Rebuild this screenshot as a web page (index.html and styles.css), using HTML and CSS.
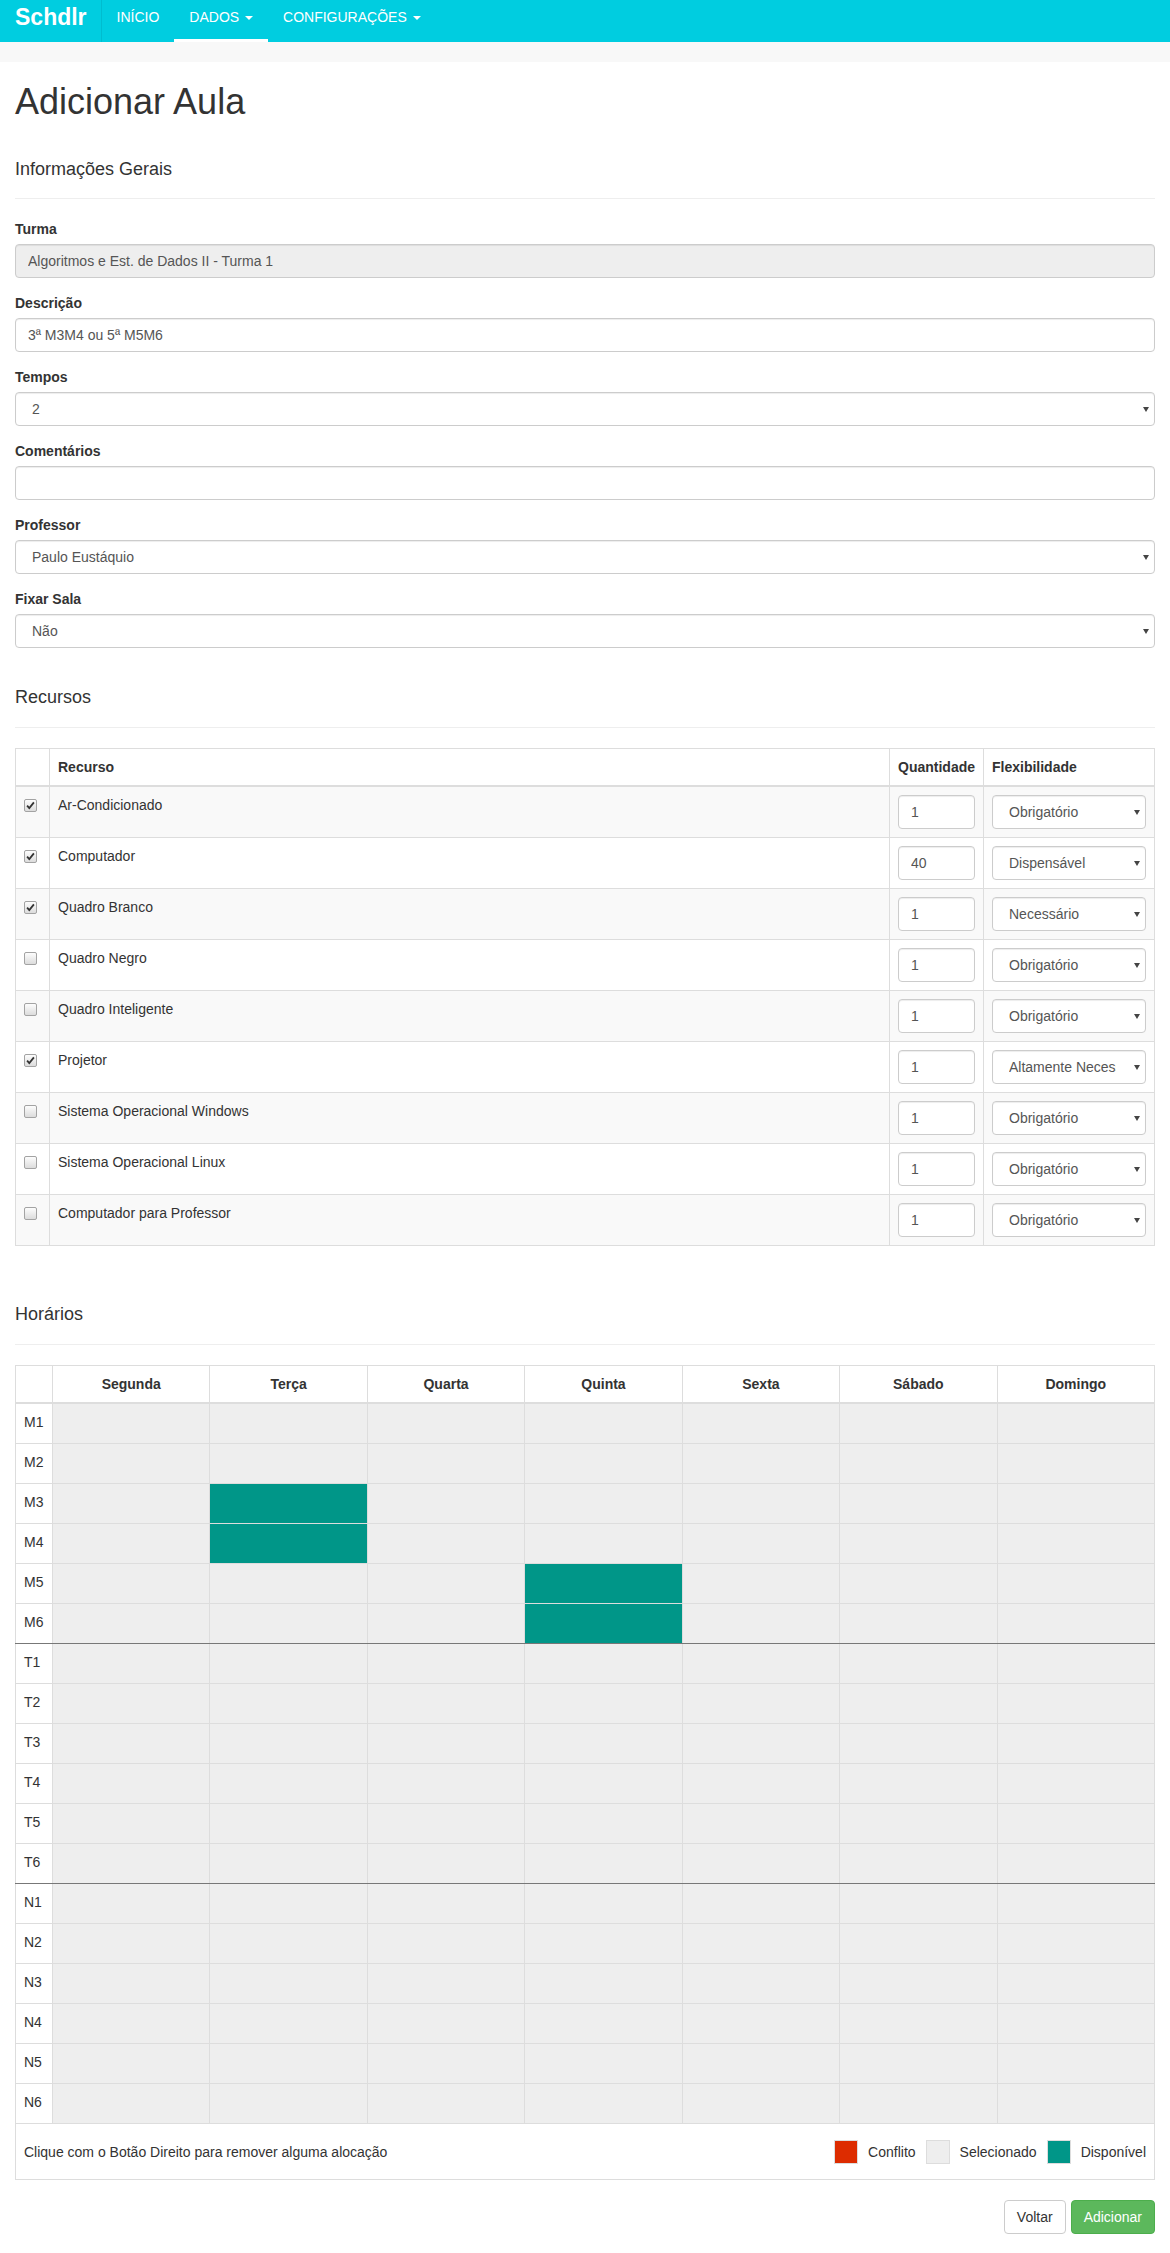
FILE: index.html
```html
<!DOCTYPE html>
<html lang="pt-BR">
<head>
<meta charset="utf-8">
<title>Adicionar Aula - Schdlr</title>
<link rel="stylesheet" href="styles.css">
</head>
<body>
<nav class="navbar">
  <a class="brand" href="#">Schdlr</a>
  <ul class="nav">
    <li><a href="#">INÍCIO</a></li>
    <li class="active"><a href="#">DADOS <span class="caret"></span></a></li>
    <li><a href="#">CONFIGURAÇÕES <span class="caret"></span></a></li>
  </ul>
</nav>
<div class="band"></div>

<div class="container">
  <h1 class="title">Adicionar Aula</h1>

  <div class="page-header first"><h4>Informações Gerais</h4></div>

  <form>
    <div class="form-group">
      <label>Turma</label>
      <input class="form-control" type="text" value="Algoritmos e Est. de Dados II - Turma 1" disabled>
    </div>
    <div class="form-group">
      <label>Descrição</label>
      <input class="form-control" type="text" value="3ª M3M4 ou 5ª M5M6">
    </div>
    <div class="form-group">
      <label>Tempos</label>
      <div class="select-wrap">
        <select class="form-control"><option>1</option><option selected>2</option><option>3</option><option>4</option></select>
      </div>
    </div>
    <div class="form-group">
      <label>Comentários</label>
      <input class="form-control" type="text" value="">
    </div>
    <div class="form-group">
      <label>Professor</label>
      <div class="select-wrap">
        <select class="form-control"><option selected>Paulo Eustáquio</option></select>
      </div>
    </div>
    <div class="form-group">
      <label>Fixar Sala</label>
      <div class="select-wrap">
        <select class="form-control"><option selected>Não</option><option>Sim</option></select>
      </div>
    </div>
  </form>

  <div class="page-header"><h4>Recursos</h4></div>

  <table class="table striped res">
    <thead>
      <tr>
        <th class="c-check"></th>
        <th>Recurso</th>
        <th class="c-qty">Quantidade</th>
        <th class="c-flex">Flexibilidade</th>
      </tr>
    </thead>
    <tbody>
      <tr>
        <td><label class="cb"><input type="checkbox" checked><span class="box"><svg viewBox="0 0 11 11"><path d="M2.1 5.6 L4.3 8.1 L8.9 2.4"/></svg></span></label></td>
        <td>Ar-Condicionado</td>
        <td><input class="form-control" type="text" value="1"></td>
        <td><div class="select-wrap"><select class="form-control"><option selected>Obrigatório</option><option>Altamente Necessário</option><option>Necessário</option><option>Dispensável</option></select></div></td>
      </tr>
      <tr>
        <td><label class="cb"><input type="checkbox" checked><span class="box"><svg viewBox="0 0 11 11"><path d="M2.1 5.6 L4.3 8.1 L8.9 2.4"/></svg></span></label></td>
        <td>Computador</td>
        <td><input class="form-control" type="text" value="40"></td>
        <td><div class="select-wrap"><select class="form-control"><option>Obrigatório</option><option>Altamente Necessário</option><option>Necessário</option><option selected>Dispensável</option></select></div></td>
      </tr>
      <tr>
        <td><label class="cb"><input type="checkbox" checked><span class="box"><svg viewBox="0 0 11 11"><path d="M2.1 5.6 L4.3 8.1 L8.9 2.4"/></svg></span></label></td>
        <td>Quadro Branco</td>
        <td><input class="form-control" type="text" value="1"></td>
        <td><div class="select-wrap"><select class="form-control"><option>Obrigatório</option><option>Altamente Necessário</option><option selected>Necessário</option><option>Dispensável</option></select></div></td>
      </tr>
      <tr>
        <td><label class="cb"><input type="checkbox"><span class="box"><svg viewBox="0 0 11 11"><path d="M2.1 5.6 L4.3 8.1 L8.9 2.4"/></svg></span></label></td>
        <td>Quadro Negro</td>
        <td><input class="form-control" type="text" value="1"></td>
        <td><div class="select-wrap"><select class="form-control"><option selected>Obrigatório</option><option>Altamente Necessário</option><option>Necessário</option><option>Dispensável</option></select></div></td>
      </tr>
      <tr>
        <td><label class="cb"><input type="checkbox"><span class="box"><svg viewBox="0 0 11 11"><path d="M2.1 5.6 L4.3 8.1 L8.9 2.4"/></svg></span></label></td>
        <td>Quadro Inteligente</td>
        <td><input class="form-control" type="text" value="1"></td>
        <td><div class="select-wrap"><select class="form-control"><option selected>Obrigatório</option><option>Altamente Necessário</option><option>Necessário</option><option>Dispensável</option></select></div></td>
      </tr>
      <tr>
        <td><label class="cb"><input type="checkbox" checked><span class="box"><svg viewBox="0 0 11 11"><path d="M2.1 5.6 L4.3 8.1 L8.9 2.4"/></svg></span></label></td>
        <td>Projetor</td>
        <td><input class="form-control" type="text" value="1"></td>
        <td><div class="select-wrap"><select class="form-control"><option>Obrigatório</option><option selected>Altamente Necessário</option><option>Necessário</option><option>Dispensável</option></select></div></td>
      </tr>
      <tr>
        <td><label class="cb"><input type="checkbox"><span class="box"><svg viewBox="0 0 11 11"><path d="M2.1 5.6 L4.3 8.1 L8.9 2.4"/></svg></span></label></td>
        <td>Sistema Operacional Windows</td>
        <td><input class="form-control" type="text" value="1"></td>
        <td><div class="select-wrap"><select class="form-control"><option selected>Obrigatório</option><option>Altamente Necessário</option><option>Necessário</option><option>Dispensável</option></select></div></td>
      </tr>
      <tr>
        <td><label class="cb"><input type="checkbox"><span class="box"><svg viewBox="0 0 11 11"><path d="M2.1 5.6 L4.3 8.1 L8.9 2.4"/></svg></span></label></td>
        <td>Sistema Operacional Linux</td>
        <td><input class="form-control" type="text" value="1"></td>
        <td><div class="select-wrap"><select class="form-control"><option selected>Obrigatório</option><option>Altamente Necessário</option><option>Necessário</option><option>Dispensável</option></select></div></td>
      </tr>
      <tr>
        <td><label class="cb"><input type="checkbox"><span class="box"><svg viewBox="0 0 11 11"><path d="M2.1 5.6 L4.3 8.1 L8.9 2.4"/></svg></span></label></td>
        <td>Computador para Professor</td>
        <td><input class="form-control" type="text" value="1"></td>
        <td><div class="select-wrap"><select class="form-control"><option selected>Obrigatório</option><option>Altamente Necessário</option><option>Necessário</option><option>Dispensável</option></select></div></td>
      </tr>
    </tbody>
  </table>

  <div class="page-header after-table"><h4>Horários</h4></div>

  <table class="table sched">
    <thead>
      <tr>
        <th class="c-slot"></th>
        <th>Segunda</th><th>Terça</th><th>Quarta</th><th>Quinta</th><th>Sexta</th><th>Sábado</th><th>Domingo</th>
      </tr>
    </thead>
    <tbody>
      <tr><td class="lbl">M1</td><td></td><td></td><td></td><td></td><td></td><td></td><td></td></tr>
      <tr><td class="lbl">M2</td><td></td><td></td><td></td><td></td><td></td><td></td><td></td></tr>
      <tr><td class="lbl">M3</td><td></td><td class="avail"></td><td></td><td></td><td></td><td></td><td></td></tr>
      <tr><td class="lbl">M4</td><td></td><td class="avail"></td><td></td><td></td><td></td><td></td><td></td></tr>
      <tr><td class="lbl">M5</td><td></td><td></td><td></td><td class="avail"></td><td></td><td></td><td></td></tr>
      <tr class="sep"><td class="lbl">M6</td><td></td><td></td><td></td><td class="avail"></td><td></td><td></td><td></td></tr>
      <tr><td class="lbl">T1</td><td></td><td></td><td></td><td></td><td></td><td></td><td></td></tr>
      <tr><td class="lbl">T2</td><td></td><td></td><td></td><td></td><td></td><td></td><td></td></tr>
      <tr><td class="lbl">T3</td><td></td><td></td><td></td><td></td><td></td><td></td><td></td></tr>
      <tr><td class="lbl">T4</td><td></td><td></td><td></td><td></td><td></td><td></td><td></td></tr>
      <tr><td class="lbl">T5</td><td></td><td></td><td></td><td></td><td></td><td></td><td></td></tr>
      <tr class="sep"><td class="lbl">T6</td><td></td><td></td><td></td><td></td><td></td><td></td><td></td></tr>
      <tr><td class="lbl">N1</td><td></td><td></td><td></td><td></td><td></td><td></td><td></td></tr>
      <tr><td class="lbl">N2</td><td></td><td></td><td></td><td></td><td></td><td></td><td></td></tr>
      <tr><td class="lbl">N3</td><td></td><td></td><td></td><td></td><td></td><td></td><td></td></tr>
      <tr><td class="lbl">N4</td><td></td><td></td><td></td><td></td><td></td><td></td><td></td></tr>
      <tr><td class="lbl">N5</td><td></td><td></td><td></td><td></td><td></td><td></td><td></td></tr>
      <tr><td class="lbl">N6</td><td></td><td></td><td></td><td></td><td></td><td></td><td></td></tr>
    </tbody>
    <tfoot>
      <tr>
        <td colspan="8">
          <div class="foot">
            <span>Clique com o Botão Direito para remover alguma alocação</span>
            <div class="legend">
              <span class="sw sw-conflict"></span><span>Conflito</span>
              <span class="sw sw-selected"></span><span>Selecionado</span>
              <span class="sw sw-avail"></span><span>Disponível</span>
            </div>
          </div>
        </td>
      </tr>
    </tfoot>
  </table>

  <div class="actions">
    <button type="button" class="btn btn-default">Voltar</button>
    <button type="button" class="btn btn-success">Adicionar</button>
  </div>
</div>
</body>
</html>
```

FILE: styles.css
```css
* {
  box-sizing: border-box;
}

body {
  margin: 0;
  font-family: "Liberation Sans", Arial, sans-serif;
  font-size: 14px;
  line-height: 1.42857143;
  color: #333;
  background: #fff;
}

/* Navbar */
.navbar {
  display: flex;
  height: 42px;
  background: #00cde0;
}

.brand {
  display: block;
  height: 42px;
  padding: 7px 14px 0 15px;
  font-size: 23px;
  font-weight: bold;
  line-height: 20px;
  color: #fff;
  text-decoration: none;
  border-right: 1px solid #00bccf;
}

.nav {
  display: flex;
  list-style: none;
  margin: 0;
  padding: 0;
}

.nav a {
  display: block;
  height: 42px;
  padding: 7px 15px 0;
  line-height: 20px;
  color: #fff;
  text-decoration: none;
}

.nav .active a {
  border-bottom: 3px solid #fff;
}

.caret {
  display: inline-block;
  width: 0;
  height: 0;
  margin-left: 2px;
  vertical-align: middle;
  border-top: 4px solid;
  border-left: 4px solid transparent;
  border-right: 4px solid transparent;
}

.band {
  height: 20px;
  background: #f8f8f8;
}

/* Page */
.container {
  padding: 0 15px 17px;
}

.title {
  margin: 20px 0 10px;
  font-size: 36px;
  font-weight: normal;
  line-height: 1.1;
}

.page-header {
  margin: 40px 0 20px;
  padding-bottom: 9px;
  border-bottom: 1px solid #eee;
}

.page-header.first {
  margin-top: 38px;
}

.page-header.after-table {
  margin-top: 59px;
}

.page-header h4 {
  margin: 10px 0;
  font-size: 18px;
  font-weight: normal;
  line-height: 1.1;
}

form {
  margin: 0;
}

.form-group {
  margin-bottom: 15px;
}

.form-group label {
  display: inline-block;
  margin-bottom: 5px;
  font-weight: bold;
}

.form-control {
  display: block;
  width: 100%;
  height: 34px;
  margin: 0;
  padding: 6px 12px;
  font-family: inherit;
  font-size: 14px;
  line-height: 1.42857143;
  color: #555;
  background: #fff;
  border: 1px solid #ccc;
  border-radius: 4px;
  box-shadow: inset 0 1px 1px rgba(0, 0, 0, 0.075);
  outline: none;
}

.form-control[disabled] {
  background: #eee;
  color: #555;
  opacity: 1;
  -webkit-text-fill-color: #555;
}

select.form-control {
  -webkit-appearance: none;
  appearance: none;
  padding-left: 16px;
  padding-right: 29px;
}

.select-wrap {
  position: relative;
}

.select-wrap::after {
  content: "";
  position: absolute;
  right: 6px;
  top: 50%;
  margin-top: -2px;
  border-top: 5px solid #444;
  border-left: 3px solid transparent;
  border-right: 3px solid transparent;
  pointer-events: none;
}

/* Tables */
.table {
  width: 100%;
  margin-bottom: 20px;
  border-collapse: collapse;
  border-spacing: 0;
  table-layout: fixed;
  border: 1px solid #ddd;
}

.table th,
.table td {
  padding: 8px;
  line-height: 20px;
  vertical-align: top;
  text-align: left;
  border: 1px solid #ddd;
}

.table thead th {
  border-bottom: 2px solid #ddd;
  vertical-align: bottom;
}

.striped tbody tr:nth-child(odd) {
  background: #f9f9f9;
}

.c-check {
  width: 34px;
}

.c-qty {
  width: 94px;
}

.c-flex {
  width: 171px;
}

/* Checkbox */
.cb {
  display: block;
  margin: 0;
}

.cb input {
  display: none;
}

.cb .box {
  display: block;
  width: 13px;
  height: 13px;
  margin-top: 4px;
  border: 1px solid #a3a3a3;
  border-radius: 2px;
  background: linear-gradient(#fdfdfd, #dcdcdc);
}

.cb .box svg {
  display: none;
  width: 11px;
  height: 11px;
  fill: none;
  stroke: #333;
  stroke-width: 1.8;
}

.cb input:checked + .box svg {
  display: block;
}

/* Schedule */
.sched thead th {
  text-align: center;
}

.sched .c-slot {
  width: 37px;
}

.sched tbody td {
  padding: 8px 8px 11px;
  background: #eee;
}

.sched tbody td.lbl {
  background: #fff;
}

.sched tbody td.avail {
  background: #009688;
}

.sched tr.sep td {
  border-bottom: 1px solid #777;
}

.sched tfoot td {
  padding: 16px 8px 15px;
  background: #fff;
}

.foot {
  display: flex;
  align-items: center;
}

.legend {
  display: flex;
  align-items: center;
  gap: 10px;
  margin-left: auto;
}

.sw {
  display: block;
  width: 24px;
  height: 24px;
  border: 1px solid #ddd;
}

.sw-conflict {
  background: #dd2c00;
}

.sw-selected {
  background: #eee;
}

.sw-avail {
  background: #009688;
}

/* Buttons */
.actions {
  display: flex;
  justify-content: flex-end;
  gap: 5px;
}

.btn {
  display: inline-block;
  margin: 0;
  padding: 6px 12px;
  font-family: inherit;
  font-size: 14px;
  line-height: 20px;
  border: 1px solid transparent;
  border-radius: 4px;
  cursor: pointer;
}

.btn-default {
  color: #333;
  background: #fff;
  border-color: #ccc;
}

.btn-success {
  color: #fff;
  background: #5cb85c;
  border-color: #4cae4c;
}
```
